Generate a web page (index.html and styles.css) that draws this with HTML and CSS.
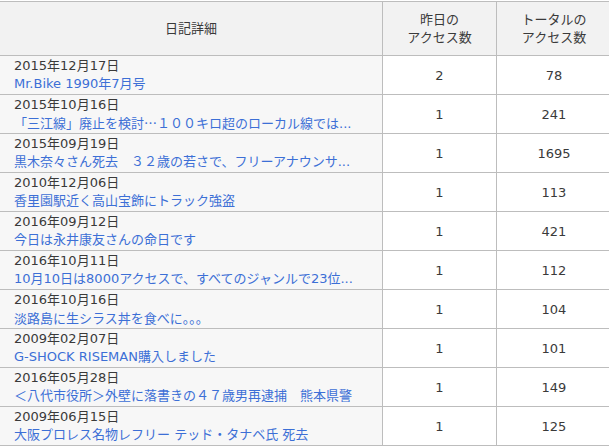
FILE: index.html
```html
<!DOCTYPE html>
<html lang="ja">
<head>
<meta charset="utf-8">
<link rel="stylesheet" href="styles.css">
</head>
<body>
<table class="ranking">
  <colgroup>
    <col class="c-detail">
    <col class="c-num">
    <col class="c-num2">
  </colgroup>
  <thead>
    <tr>
      <th>日記詳細</th>
      <th>昨日の<br>アクセス数</th>
      <th>トータルの<br>アクセス数</th>
    </tr>
  </thead>
  <tbody>
    <tr><td class="detail"><span class="date">2015年12月17日</span><a class="title">Mr.Bike 1990年7月号</a></td><td class="num">2</td><td class="num">78</td></tr>
    <tr><td class="detail"><span class="date">2015年10月16日</span><a class="title">「三江線」廃止を検討<span class="cjk">…</span>１００キロ超のローカル線では...</a></td><td class="num">1</td><td class="num">241</td></tr>
    <tr><td class="detail"><span class="date">2015年09月19日</span><a class="title">黒木奈々さん死去　３２歳の若さで、フリーアナウンサ...</a></td><td class="num">1</td><td class="num">1695</td></tr>
    <tr><td class="detail"><span class="date">2010年12月06日</span><a class="title">香里園駅近く高山宝飾にトラック強盗</a></td><td class="num">1</td><td class="num">113</td></tr>
    <tr><td class="detail"><span class="date">2016年09月12日</span><a class="title">今日は永井康友さんの命日です</a></td><td class="num">1</td><td class="num">421</td></tr>
    <tr><td class="detail"><span class="date">2016年10月11日</span><a class="title">10月10日は8000アクセスで、すべてのジャンルで23位...</a></td><td class="num">1</td><td class="num">112</td></tr>
    <tr><td class="detail"><span class="date">2016年10月16日</span><a class="title">淡路島に生シラス丼を食べに<span class="cjk">。。。</span></a></td><td class="num">1</td><td class="num">104</td></tr>
    <tr><td class="detail"><span class="date">2009年02月07日</span><a class="title">G-SHOCK RISEMAN購入しました</a></td><td class="num">1</td><td class="num">101</td></tr>
    <tr><td class="detail"><span class="date">2016年05月28日</span><a class="title">＜八代市役所＞外壁に落書きの４７歳男再逮捕　熊本県警</a></td><td class="num">1</td><td class="num">149</td></tr>
    <tr><td class="detail"><span class="date">2009年06月15日</span><a class="title">大阪プロレス名物レフリー テッド・タナベ氏 死去</a></td><td class="num">1</td><td class="num">125</td></tr>
  </tbody>
</table>
</body>
</html>
```

FILE: styles.css
```css
html, body {
  margin: 0;
  padding: 0;
  background: #ffffff;
}
body {
  font-family: "DejaVu Sans", "Noto Sans CJK JP", sans-serif;
  font-size: 13px;
  color: #3a3a3a;
  overflow: hidden;
}
.ranking {
  border-collapse: collapse;
  table-layout: fixed;
  width: 612px;
  margin: 1px 0 0 -1px;
}
.c-detail { width: 383px; }
.c-num { width: 114px; }
.c-num2 { width: 115px; }
.ranking th,
.ranking td {
  border: 1px solid #bdbdbd;
}
.ranking th {
  background: #f2f2f2;
  font-weight: normal;
  height: 53px;
  padding: 0;
  line-height: 18px;
  text-align: center;
  vertical-align: middle;
}
.ranking td {
  height: 38px;
  padding: 0;
  vertical-align: middle;
}
.detail {
  background: #f7f7f7;
  padding-left: 14px !important;
}
.date,
.title {
  display: block;
  line-height: 18px;
  white-space: nowrap;
  overflow: hidden;
}
.title {
  color: #3c6fd6;
  text-decoration: none;
}
.cjk {
  font-family: "Noto Sans CJK JP", sans-serif;
}
.num {
  text-align: center;
  background: #ffffff;
}
```
